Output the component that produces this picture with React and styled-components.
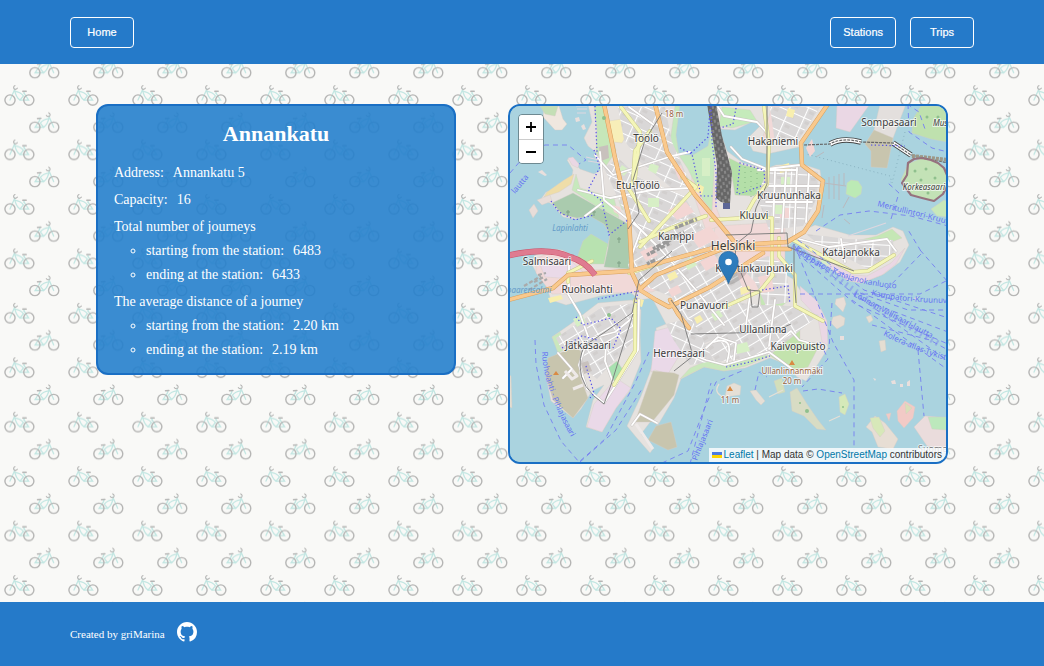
import React from 'react';
import styled, { createGlobalStyle } from 'styled-components';
import { BsGithub } from 'react-icons/bs';

const GlobalStyle = createGlobalStyle`
  * { box-sizing: border-box; }
  body {
    margin: 0;
    background: #f9f9f7;
    color: #fff;
    font-family: "Liberation Serif", "Times New Roman", serif;
  }
`;

const Page = styled.div`
  position: relative;
  isolation: isolate;
  display: flex;
  flex-direction: column;
  min-height: 100vh;
`;

const Backdrop = styled.svg`
  position: absolute;
  inset: 0;
  z-index: -1;
  width: 100%;
  height: 100%;
`;

const Header = styled.header`
  display: flex;
  justify-content: space-between;
  align-items: center;
  min-height: 64px;
  padding: 0 70px;
  background: #257ac9;
`;

const Nav = styled.nav`
  display: flex;
  gap: 14px;
`;

const NavButton = styled.button`
  min-width: 64px;
  height: 31px;
  padding: 0 12px;
  border: 1px solid #fff;
  border-radius: 4px;
  background: transparent;
  color: #fff;
  font: 11px/16px "Liberation Sans", Arial, sans-serif;
  -webkit-text-stroke: 0.2px #fff;
  cursor: pointer;
`;

const Main = styled.main`
  flex: 1;
  display: flex;
  flex-wrap: wrap;
  justify-content: center;
  align-items: flex-start;
  gap: 52px;
  padding: 40px 16px;
`;

const Card = styled.section`
  width: 360px;
  padding: 16px 16px 11px;
  border: 2px solid #1a6fc4;
  border-radius: 12px;
  background: rgba(37, 128, 204, 0.9);
  font-size: 14px;
  line-height: 24px;
`;

const Title = styled.h1`
  margin: 0 0 15px;
  font-size: 22px;
  line-height: 24px;
  text-align: center;
`;

const Details = styled.div`
  display: flex;
  flex-direction: column;
  gap: 3px;
`;

const Line = styled.p`
  margin: 0;
`;

const Value = styled.span`
  margin-left: 9px;
`;

const Breakdown = styled.ul`
  margin: 0;
  padding-left: 32px;
  list-style: circle;
`;

const MapFrame = styled.section`
  position: relative;
  width: 440px;
  height: 360px;
  overflow: hidden;
  border: 2px solid #1a6fc4;
  border-radius: 12px;
  background: #aad3df;
`;

const MapCanvas = styled.svg`
  display: block;
  width: 100%;
  height: 100%;
`;

const ZoomControl = styled.div`
  position: absolute;
  top: 8px;
  left: 8px;
  display: flex;
  flex-direction: column;
  border: 1px solid rgba(0, 0, 0, 0.35);
  border-radius: 4px;
  overflow: hidden;
`;

const ZoomButton = styled.button`
  display: grid;
  place-items: center;
  width: 24px;
  height: 24px;
  padding: 0;
  border: 0;
  background: #fff;
  color: #000;
  cursor: pointer;

  & + & { border-top: 1px solid #ccc; }
`;

const Attribution = styled.div`
  position: absolute;
  right: 0;
  bottom: 0;
  display: flex;
  align-items: center;
  gap: 2px;
  padding: 0 4px 0 3px;
  background: rgba(255, 255, 255, 0.8);
  color: #333;
  font: 10px/14px "Liberation Sans", Arial, sans-serif;
  white-space: nowrap;

  a { color: #0078a8; text-decoration: none; }
`;

const Footer = styled.footer`
  display: flex;
  align-items: center;
  gap: 12px;
  min-height: 64px;
  padding: 0 70px;
  background: #257ac9;
  font-size: 11px;
`;

const GithubLink = styled.a`
  display: flex;
  padding-bottom: 4px;
  color: #fff;
`;

const Bike = (props) => (
  <g fill="none" strokeLinecap="round" {...props}>
    <g stroke="#c2e6e2" strokeWidth="1.3">
      <path d="M10 45.6 L14.6 35.2 Q15.6 42.4 20 45.6 L28.6 45.6 L24.2 39" />
      <path d="M14.8 37 Q20.5 37.5 23.4 41.5 L20 45.6" />
      <path d="M24.2 39 L23.8 37.2" />
    </g>
    <g stroke="#b5b5b4" strokeWidth="1.4">
      <circle cx="10" cy="45.6" r="5.1" />
      <circle cx="28.8" cy="45.6" r="5.1" />
      <path d="M15 31.2 Q12.8 32.4 14 34.4 Q15.6 35.8 17.4 33.8" strokeWidth="1.1" />
      <path d="M22.8 36.8 L26.2 36.9" strokeWidth="1.5" />
    </g>
  </g>
);

const BikeBackdrop = () => (
  <Backdrop aria-hidden="true">
    <defs>
      <pattern id="bikes" width="64" height="54.44" patternUnits="userSpaceOnUse">
        <Bike />
        <Bike transform="translate(63.7 -27.3) scale(-1 1)" />
      </pattern>
    </defs>
    <rect width="100%" height="100%" fill="url(#bikes)" />
  </Backdrop>
);

/* Land, parks and built-up areas: [fill, path] */
const areas = [
  ['#e6e2df', 'M588 104 L592 122 L584 138 L588 146 L597 153 L601 170 L594 174 L580 169 L570 158 L567 160 L573 170 L571 182 L558 189 L546 192 L541 199 L552 204 L563 217 L575 219 L590 215 L604 224 L610 234 L608 246 L596 258 L576 257 L562 250 L548 249 L535 255 L531 263 L536 272 L545 283 L551 300 L566 305 L600 296 L630 292 L640 300 L652 298 L666 324 L656 328 L658 345 L650 372 L641 396 L627 426 L636 437 L650 453 L653 449 L641 434 L651 421 L658 425 L674 398 L681 379 L704 367 L724 371 L745 368 L770 358 L786 364 L797 377 L806 381 L818 364 L828 348 L824 324 L812 306 L800 290 L793 279 L781 272 L780 254 L793 241 L803 247 L828 265 L849 281 L862 283 L884 274 L900 262 L909 245 L903 231 L893 227 L876 235 L850 235 L815 225 L806 229 L817 214 L823 190 L820 170 L802 164 L800 147 L828 104 Z'],
  ['#e6e2df', 'M552 337 L572 323 L598 303 L632 300 L641 310 L640 335 L641 362 L629 392 L616 408 L602 432 L586 427 L593 400 L604 385 L592 391 L581 409 L573 418 L551 401 L546 376 L552 359 L560 351 Z'],
  ['#c8c5ae', 'M548 358 L575 347 L582 352 L579 373 L588 398 L573 418 L553 400 L546 376 Z'],
  ['#ead9e8', 'M594 404 L616 378 L631 388 L616 408 L602 432 L587 427 Z'],
  ['#ead9e8', 'M655 331 L674 326 L682 351 L668 374 L655 370 L651 372 Z'],
  ['#c8c5ae', 'M653 371 L674 373 L679 375 L674 395 L652 422 L635 422 Z'],
  ['#c8c5ae', 'M656 426 L671 422 L677 447 L668 450 L648 440 Z'],
  ['#f1d9d8', 'M536 259 L548 253 L576 259 L592 270 L652 267 L674 281 L652 292 L552 294 L536 273 Z'],
  ['#eadae8', 'M539 262 L570 260 L583 272 L560 278 L545 277 Z'],
  ['#f1d9d8', 'M715 226 L785 222 L785 260 L764 267 L768 288 L745 295 L733 270 L711 258 Z'],
  ['#f1d9d8', 'M691 104 L708 106 L716 207 L723 225 L706 231 L692 190 Z'],
  ['#f1d9d8', 'M772 106 L800 106 L799 120 L775 142 L762 140 Z'],
  ['#c5e8bf', 'M675 106 L713 106 L716 132 L712 211 L703 200 L688 169 L670 142 Z'],
  ['#aad3df', 'M680 104 L711 104 L714 118 L708 146 L693 155 L679 155 L676 135 Z'],
  ['#c5ebbb', 'M722 107 L750 110 L757 121 L732 128 L719 126 Z'],
  ['#aad3df', 'M719 129 L735 130 L754 121 L760 126 L747 139 L753 151 L767 154 L799 147 L802 164 L776 165 L766 169 L743 163 L727 151 Z'],
  ['#b4dfa8', 'M729 158 L743 165 L765 170 L765 184 L754 196 L735 195 Z'],
  ['#aacbae', 'M552 203 L573 193 L630 225 L629 269 L604 267 L608 248 L610 234 L604 224 L590 216 L577 218 L563 215 Z'],
  ['#b8e2b0', 'M583 241 L591 234 L608 244 L604 264 L589 264 L577 258 Z'],
  ['#c7e9bd', 'M576 174 L580 188 L614 198 L619 218 L596 206 L572 190 Z'],
  ['#efdda8', 'M547 192 L564 180 L574 174 L571 184 L559 192 L544 197 Z'],
  ['#c6e7b9', 'M594 106 L606 106 L612 132 L616 151 L606 166 L596 152 L597 130 Z'],
  ['#f7eeb8', 'M609 121 L622 119 L626 136 L622 143 L613 142 Z'],
  ['#d8edbf', 'M625 126 L635 122 L644 138 L631 145 Z'],
  ['#cae8bd', 'M612 180 L633 180 L635 205 L622 210 Z'],
  ['#cae8bd', 'M552 337 L560 332 L568 348 L558 353 Z'],
  ['#cae8bd', 'M596 324 L610 321 L615 333 L607 346 L598 338 Z'],
  ['#a8e1b0', 'M607 369 L617 361 L623 370 L614 382 Z'],
  ['#cae8bd', 'M680 379 L704 367 L724 371 L746 366 L770 356 L770 351 L747 360 L721 364 L706 361 L690 368 Z'],
  ['#c3e3ad', 'M769 329 L790 314 L800 322 L800 340 L820 344 L808 367 L794 370 L770 356 Z'],
  ['#c5e7b5', 'M759 288 L782 286 L789 300 L782 306 L761 305 Z'],
  ['#ead7e4', 'M800 286 L817 301 L827 321 L828 345 L822 342 L818 318 L801 300 Z'],
  ['#c5e7b5', 'M860 240 L877 236 L892 229 L902 238 L889 243 L870 250 Z'],
  ['#ead7e4', 'M800 246 L815 250 L842 268 L854 275 L867 276 L891 263 L905 248 L896 264 L882 275 L861 283 L847 280 L827 266 Z'],
  ['#ead7e4', 'M837 104 L870 104 L850 132 L836 128 Z'],
  ['#e3dfdd', 'M880 104 L906 104 L892 141 L873 134 Z'],
  ['#c8c5ae', 'M865 144 L874 130 L893 138 L887 168 L871 167 L871 151 Z'],
  ['#bfe1ae', 'M921 106 L948 106 L948 142 L931 139 L912 133 L913 119 Z'],
  ['#c3e2b6', 'M908 164 L922 158 L939 163 L948 175 L946 190 L934 201 L911 195 L901 180 Z'],
  ['#bceab5', 'M847 183 L851 180 L858 181 L862 187 L861 194 L855 198 L846 194 Z'],
  ['#c8e8ba', 'M931 209 L944 200 L948 202 L948 217 L937 216 Z'],
  ['#f0e7df', 'M544 108 L559 106 L563 119 L567 124 L562 130 L555 130 L543 117 Z'],
  ['#c4dfb6', 'M540 106 L558 106 L555 116 L545 114 Z'],
  ['#ead7e4', 'M568 158 L573 157 L579 164 L578 168 L572 165 Z'],
  ['#e8ddd9', 'M529 210 L534 204 L538 211 L533 218 Z'],
  ['#e8ddd9', 'M537 200 L550 195 L552 201 L542 205 Z'],
  ['#e5dfd6', 'M727 386 L734 383 L741 386 L740 395 L725 397 Z'],
  ['#e5dfd6', 'M750 391 L756 390 L765 401 L761 405 L756 400 Z'],
  ['#d3dfbb', 'M774 381 L782 378 L785 392 L778 394 Z'],
  ['#d8dcc4', 'M790 392 L797 388 L807 404 L818 420 L826 430 L817 429 L804 416 L792 411 Z'],
  ['#d5e9b9', 'M839 397 L845 394 L849 404 L845 415 L840 412 Z'],
  ['#e5ddd4', 'M833 317 L840 315 L845 318 L844 325 L837 329 L831 323 Z'],
  ['#e9ded7', 'M836 299 L844 297 L846 304 L843 312 L839 308 L835 304 Z'],
  ['#e7ded4', 'M866 427 L875 416 L885 423 L898 439 L893 449 L878 447 L872 432 Z'],
  ['#d7e8b9', 'M870 418 L879 417 L885 431 L880 437 L873 428 Z'],
  ['#f2cac6', 'M897 411 L905 401 L915 407 L913 418 L904 428 L898 421 Z'],
  ['#d9dfb8', 'M905 403 L912 408 L906 414 Z'],
  ['#eadcdc', 'M914 427 L925 416 L948 418 L948 450 L927 446 Z'],
  ['#bce8bc', 'M928 417 L948 417 L948 430 L932 429 Z'],
  ['#f2cac6', 'M886 414 L891 413 L889 421 Z'],
  ['#e5ded2', 'M866 317 L871 315 L873 320 L869 323 Z'],
  ['#e5ded2', 'M879 341 L885 340 L886 350 L881 352 Z'],
  ['#e5ded2', 'M506 373 L511 376 L512 408 L506 405 Z'],
];

/* Blocks of streets, each filled with a grid turned to its own angle */
const blocks = [
  ['a', 'M604 168 L618 158 L640 178 L684 196 L706 232 L665 246 L641 240 L627 218 Z'],
  ['a', 'M618 107 L665 107 L672 142 L690 183 L674 190 L640 162 L624 140 Z'],
  ['b', 'M635 240 L690 217 L730 255 L744 292 L732 332 L690 349 L672 297 L640 284 L628 266 Z'],
  ['c', 'M740 266 L768 256 L786 265 L790 302 L766 306 L755 282 Z'],
  ['c', 'M757 196 L767 171 L800 167 L818 172 L817 198 L803 226 L769 230 Z'],
  ['b', 'M728 302 L761 305 L790 306 L819 315 L770 355 L716 362 L704 345 L733 331 Z'],
  ['b', 'M556 338 L602 307 L638 303 L634 340 L597 379 L580 365 L581 347 L562 350 Z'],
  ['c', 'M806 234 L848 239 L893 240 L894 255 L870 270 L851 260 L828 252 Z'],
  ['a', 'M770 107 L820 107 L799 139 L775 143 Z'],
  ['a', 'M666 324 L691 318 L714 361 L690 365 L673 339 Z'],
];

/* Roads, drawn twice each: casing first, then surface */
const roads = {
  minor: [
    'M600 152 L604 200 L640 229 L661 250 L696 290 L724 325',
    'M595 155 L613 175 L672 156 L690 152',
    'M654 125 L629 107', 'M578 190 L610 198 L652 190 L691 188',
    'M602 203 L585 216', 'M632 220 L641 230 L630 260',
    'M568 294 L580 314 L589 339 L615 332 L636 315',
    'M585 347 L579 365 L587 389 L604 403 L617 383 L638 350 L639 300',
    'M606 345 L605 361 L613 382', 'M569 258 L569 293',
    'M718 107 L724 116 L757 122 L767 133', 'M731 147 L742 159 L767 169 L800 165',
    'M758 170 L797 170', 'M769 186 L819 186', 'M766 202 L812 202',
    'M775 172 L773 230', 'M786 172 L782 232', 'M797 168 L794 240', 'M809 173 L806 222',
    'M799 239 L829 247 L887 239 L896 251', 'M841 239 L845 262',
    'M691 354 L706 360 L725 365 L769 352 L792 369',
    'M706 348 L718 337 L736 343 L734 360', 'M714 342 Q735 335 727 362',
    'M769 349 L791 331 L799 340 L817 345', 'M750 295 L745 332', 'M775 300 L769 346',
    'M632 425 L640 414 L657 423', 'M558 353 L572 369 L563 378',
  ],
  yellow: [
    'M621 107 L640 132 L635 178 L629 189 L649 221',
    'M650 131 L635 151 L633 182', 'M640 242 L671 228 L706 216',
    'M711 220 L744 218 L754 200 L767 184 L769 144 L764 107',
    'M754 218 L772 218 L772 275', 'M568 282 L568 273 L592 261',
    'M629 273 L661 263', 'M779 238 L779 256 L795 275 L795 306 L823 321',
    'M793 240 L853 272 L868 271 L894 255', 'M635 300 L635 351 L614 385',
    'M640 247 L696 187 L682 177', 'M773 275 L760 291 L724 307',
  ],
  orange: [
    'M604 104 L615 158 L629 218 L632 273 L640 290 L656 300 L669 307 L710 287 L763 253',
    'M655 104 L667 152 L695 195 L718 222 L736 244',
    'M508 300 L553 288 L568 275 L630 271 L720 246 L787 242 L804 232 L818 211 L823 181 L802 165 L801 143 L828 104',
    'M640 289 L656 275 L725 248', 'M725 249 L790 249',
    'M670 300 L678 314 L689 328',
  ],
};

const tracks = [
  'M662 113 L645 140 L633 180 L639 213 L628 229',
  'M767 104 L767 184 L756 208 L751 232 L736 244 L735 258 L748 290 L760 291 L758 307 L752 307 L750 289',
  'M671 300 L681 314 L693 356 L674 371', 'M587 344 L605 332 L632 313 L639 280 L672 251',
  'M633 314 L611 385 L604 404 Q580 388 580 366 Q580 350 587 344', 'M726 235 L787 233 L788 247 L854 271',
  'M794 244 L794 276 L796 303', 'M691 334 L773 332 L791 324',
];

const ferries = [
  'M510 173 L528 152 L545 145 L568 145 L586 160 L579 164',
  'M535 340 L536 364 L544 405 L561 441 L579 462 L605 439 L635 383 L649 352',
  'M580 462 L616 430 L642 389', 'M662 463 L688 451 L706 405 L716 382 L744 370',
  'M690 464 L711 383', 'M816 231 L840 215 L869 211 L911 216 L948 226',
  'M891 219 L899 193 L888 183 L891 182', 'M908 104 L909 132 L932 148 L948 152',
  'M907 104 L919 112 L925 129', 'M798 240 L864 290 L948 318',
  'M798 246 L858 298 L948 332', 'M797 253 L855 304 L948 344',
  'M800 294 L920 294 L948 280', 'M795 246 L833 342 L854 380 L854 450',
  'M886 290 L922 253 L907 228', 'M920 250 L948 282', 'M860 293 L908 310 L948 310',
  'M860 298 L948 361', 'M852 300 L948 370', 'M872 325 L930 340 L948 350',
  'M918 350 L924 416', 'M803 391 L818 389 L842 393', 'M820 342 L828 359 L802 387',
  'M755 390 L759 372 L767 377', 'M832 303 L829 349',
];

const cycleways = [
  'M594 150 L600 167 L588 190 L602 201 L609 235 L629 219',
  'M680 148 L692 154 L701 196 L713 196', 'M711 106 L712 142 L716 172 L716 209',
  'M691 153 L708 137 L710 110', 'M736 108 L733 124 L720 128',
  'M737 193 L740 163 L764 170 L765 184', 'M739 194 L761 186',
  'M598 299 L638 291 L636 303', 'M576 317 L583 325 L611 318 L621 329 L613 348',
  'M586 366 L594 393 L590 398', 'M726 367 L746 363 L770 356',
  'M762 290 L788 286 L790 304', 'M551 201 L559 212 L575 220 L594 215',
  'M595 106 L597 152', 'M871 145 L905 146', 'M562 348 L582 336 L597 340',
];

const labels = [
  ['Töölö', 646, 142], ['Etu-Töölö', 638, 189], ['Hakaniemi', 773, 145],
  ['Sompasaari', 889, 126], ['Kruununhaka', 789, 199], ['Kluuvi', 754, 219],
  ['Kamppi', 676, 240], ['Salmisaari', 547, 265], ['Ruoholahti', 587, 293],
  ['Kaartinkaupunki', 754, 272], ['Katajanokka', 851, 256], ['Punavuori', 704, 309],
  ['Ullanlinna', 763, 333], ['Kaivopuisto', 798, 350], ['Jätkäsaari', 588, 349],
  ['Hernesaari', 679, 357],
];

const Roads = ({ paths, casing, fill, width }) => (
  <g fill="none" strokeLinejoin="round" strokeLinecap="round">
    {paths.map((d) => <path key={d} d={d} stroke={casing} strokeWidth={width + 1} />)}
    {paths.map((d) => <path key={d} d={d} stroke={fill} strokeWidth={width} />)}
  </g>
);

const StreetGrid = ({ id, angle }) => (
  <pattern id={id} width="17" height="11" patternUnits="userSpaceOnUse" patternTransform={`rotate(${angle})`}>
    <rect width="17" height="11" fill="#d9d7d7" />
    <rect x="3" y="3" width="5" height="3" fill="#d2cfce" />
    <path d="M0 0 H17 M0 0 V11" stroke="#fff" strokeWidth="2.2" />
  </pattern>
);

const HelsinkiMap = () => (
  <MapCanvas viewBox="510 106 436 356" preserveAspectRatio="xMidYMid slice" role="img" aria-label="Map of Helsinki">
    <defs>
      <StreetGrid id="grid-a" angle={24} />
      <StreetGrid id="grid-b" angle={-31} />
      <StreetGrid id="grid-c" angle={3} />
      <pattern id="sleepers" width="6" height="7" patternUnits="userSpaceOnUse" patternTransform="rotate(-8)">
        <rect width="6" height="7" fill="#666" />
        <path d="M1 1 V4 M4 4 V7" stroke="#aaa" strokeWidth="1" />
      </pattern>
      <linearGradient id="pin" x2="0" y2="1">
        <stop offset="0" stopColor="#2e7fc1" />
        <stop offset="1" stopColor="#2b76b4" />
      </linearGradient>
      <path id="ferry-west" d="M542 352 Q543 390 576 446" />
      <path id="ferry-south" d="M697 461 L718 408" />
      <path id="ferry-katajanokka" d="M794 250 Q838 286 905 289" />
      <path id="ferry-north" d="M877 206 L960 227" />
      <path id="ferry-kruunu" d="M871 295 Q904 304 970 303" />
      <path id="ferry-kolera" d="M883 335 Q915 352 965 366" />
      <path id="ferry-mid" d="M853 296 L945 346" />
    </defs>
    <rect x="510" y="106" width="436" height="356" fill="#aad3df" />

    {areas.map(([fill, d]) => <path key={d} d={d} fill={fill} stroke="#d3cdc4" strokeWidth="0.4" strokeLinejoin="round" />)}
    {blocks.map(([grid, d]) => <path key={d} d={d} fill={`url(#grid-${grid})`} />)}

    <g fill="#f3d6d4">
      <path d="M668 210 l18 -8 8 10 -17 8z M690 236 l20 -10 9 12 -20 10z M640 252 l12 -6 6 9 -12 6z M700 262 l14 -8 6 9 -14 8z M758 277 l13 -3 3 17 -12 2z M674 168 l7 -3 5 12 -7 3z M806 148 l6 -9 3 12 -5 6z M668 290 l10 -5 4 7 -10 5z M612 205 l8 2 2 9 -8 -4z M780 208 h9 v10 h-9z" />
    </g>
    <g fill="#d7efc6">
      <path d="M648 198 h11 v9 h-11z M683 262 l9 -5 5 8 -9 5z M711 314 l8 -4 4 6 -8 5z M775 205 h8 v9 h-8z M781 177 h9 v8 h-9z M573 319 l9 -4 4 7 -9 5z M822 256 l9 2 -2 8 -8 -4z M702 158 h8 v18 h-8z M650 163 l9 3 -3 8 -8 -4z M622 165 l7 5 -5 6 -6 -5z M735 345 l12 -3 3 9 -13 3z" />
    </g>
    <g fill="#f8efae">
      <path d="M779 166 l10 -3 1 8 -10 2z M667 275 l8 -4 3 6 -8 4z M694 318 l6 -3 3 5 -6 4z M637 298 l7 2 -2 7 -6 -2z M740 288 l9 -2 2 5 -10 4z M548 298 l13 -3 2 4 -13 4z M788 108 l7 2 -2 8 -7 -2z M697 183 l7 4 -2 8 -7 -4z" />
    </g>
    <path d="M599 147 L608 145 L609 158 L601 161 Z M581 363 L588 361 L592 371 L584 374 Z" fill="#c8c1bd" />
    <path d="M745 167 V197 M751 166 V197 M757 168 V195" stroke="#87b985" strokeWidth="1" strokeDasharray="1 4" />
    <path d="M568 210 v6 M566 212 h4 M594 210 v6 M592 212 h4 M619 237 v6 M617 239 h4 M619 261 v6 M617 263 h4" stroke="#7f9f85" strokeWidth="1" />

    <Roads paths={roads.minor} casing="#c9c4c2" fill="#fff" width={1.8} />
    <Roads paths={roads.yellow} casing="#c9c98a" fill="#f4f6b8" width={3} />
    <Roads paths={roads.orange} casing="#d8a05e" fill="#f9c98d" width={3.4} />
    <path d="M506 256 Q548 246 570 257 Q585 261 595 275" fill="none" stroke="#c9556c" strokeWidth="6" />
    <path d="M506 256 Q548 246 570 257 Q585 261 595 275" fill="none" stroke="#df7b90" strokeWidth="5" />

    <g fill="none" stroke="#777" strokeWidth="0.9">
      {tracks.map((d) => <path key={d} d={d} />)}
    </g>
    <path d="M707 104 L716 104 L722 136 L732 172 L730 204 L721 202 L716 198 L717 165 Z" fill="url(#sleepers)" />
    <path d="M723 203 h7 v6 h-7z" fill="#5d6797" />
    <path d="M653 249 L678 236 M647 255 L670 243 M664 243 L684 232 M675 228 L697 219 M647 264 L657 259" stroke="#999" strokeWidth="3.5" strokeDasharray="3 1 5 2" />
    <path d="M524 286 l17 -10 M529 290 l18 -11 M534 282 l10 -5 M538 275 l8 -2" stroke="#aaa" strokeWidth="2.2" strokeDasharray="4 2" />

    <g fill="none" strokeLinejoin="round">
      <path d="M830 144 Q842 137 861 142 M893 143 L911 155" stroke="#444" strokeWidth="5.5" />
      <path d="M830 144 Q842 137 861 142 M893 143 L911 155" stroke="#fff" strokeWidth="3.8" />
      <path d="M804 145 L830 144 Q842 137 861 142 L893 143 L911 155 L948 163" stroke="#666" strokeWidth="1.2" strokeDasharray="3 1" />
      <path d="M912 156 L948 160" stroke="#9d9887" strokeWidth="4" strokeDasharray="3 1" />
      <path d="M908 163 L914 159 L922 158 L931 160 L938 163 L944 168 L947 175 L948 184 L943 194 L934 201 L922 198 L911 195 L902 183 L907 175 Z" stroke="#96727e" strokeWidth="2.2" />
      <path d="M824 183 L846 186 M829 177 V199 M834 176 V199 M839 174 V200 M844 173 V185 M843 208 L849 197 M844 219 L850 224 M822 218 l2 -13 M824 152 l-8 5" stroke="#b9b9be" strokeWidth="1" />
      <path d="M848 236 L886 223 M576 106 h11 M577 109 h10 M577 113 h9 M586 157 l13 3 M588 161 l13 2" stroke="#ded7df" strokeWidth="1.2" />
      <path d="M905 132 L892 183 L890 176 L806 154" stroke="#7fa8b8" strokeWidth="0.8" strokeDasharray="1 3" />
      <path d="M636 424 L653 449 M565 371 l7 8 5 -3 -5 -6 M573 389 l10 -4" stroke="#eee9e8" strokeWidth="3" />
      <path d="M719 384 Q713 392 723 397 M769 397 L783 390 M829 421 L840 416" stroke="#e5dfd6" strokeWidth="1.3" />
    </g>

    <g fill="none" stroke="#7b87ef" strokeWidth="1" strokeDasharray="5 4">
      {ferries.map((d) => <path key={d} d={d} />)}
    </g>
    <path d="M792 246 L815 261 L838 279 L869 301 M874 306 L939 344" fill="none" stroke="#7177ef" strokeWidth="6" strokeDasharray="2 4" opacity="0.4" />
    <g fill="none" stroke="#554fe8" strokeWidth="1.2" strokeDasharray="1.3 2.4">
      {cycleways.map((d) => <path key={d} d={d} />)}
    </g>

    <g fill="#d98a43">
      <path d="M730 386 l3 5 h-6z M792 360 l3 5 h-6z M556 371 l3 4 h-6z" />
    </g>
    <g fill="#8fc08d">
      <circle cx="915" cy="171" r="1.5" /><circle cx="926" cy="169" r="1.5" /><circle cx="921" cy="180" r="1.5" />
      <circle cx="935" cy="178" r="1.5" /><circle cx="928" cy="193" r="1.5" /><circle cx="938" cy="117" r="1.5" />
      <circle cx="927" cy="117" r="1.5" /><circle cx="807" cy="411" r="2" /><circle cx="800" cy="403" r="1" />
      <circle cx="843" cy="407" r="1" /><circle cx="609" cy="315" r="2" /><circle cx="604" cy="118" r="2" />
    </g>
    <g fill="#e9dfdd">
      <path d="M538 172 l4 -2 5 5 -2 1z M575 118 l4 -1 1 4 -4 1z M581 126 l3 -2 2 5 -3 1z M586 138 l4 -4 1 7 -4 3z M873 378 l3 1 -1 2z M891 381 l4 -1 1 4 -4 0z M900 384 h3 v3 h-3z M907 382 l3 -2 0 6 -3 0z M840 336 h4 v4 h-4z M914 298 l4 -1 -1 4z" />
    </g>

    <g fontFamily='"Noto Sans", sans-serif' fontSize="9" fill="#6674f2">
      <g fontStyle="italic" fontSize="8" fill="#659bc8" textAnchor="middle">
        <text x="570" y="231">Lapinlahti</text>
        <text x="529" y="293">baarensalmi</text>
      </g>
      <text transform="translate(515 194) rotate(-50)" fontSize="8">lautta</text>
      <text fontSize="8"><textPath href="#ferry-west">Ruoholahti - Pihlajasaari</textPath></text>
      <text fontSize="8"><textPath href="#ferry-south">Pihlajasaari</textPath></text>
      <text fontSize="8"><textPath href="#ferry-katajanokka">Kauppatori-Katajanokanluoto</textPath></text>
      <text fontSize="8"><textPath href="#ferry-north">Meritullintori-Kruunu</textPath></text>
      <text fontSize="8"><textPath href="#ferry-kruunu">Kauppatori-Kruunuv</textPath></text>
      <text fontSize="8"><textPath href="#ferry-kolera">Kolera-allas-Tykist</textPath></text>
      <text fontSize="8"><textPath href="#ferry-mid">Lonnan-Vallisaari-lautta</textPath></text>
    </g>

    <g fontFamily='"Noto Sans", sans-serif' textAnchor="middle" paintOrder="stroke" stroke="#ffffff" strokeOpacity="0.65" strokeWidth="2" strokeLinejoin="round" fill="#3c3c3c">
      {labels.map(([name, x, y]) => <text key={name} x={x} y={y} fontSize="10">{name}</text>)}
      <text x="733" y="250" fontSize="12">Helsinki</text>
      <g fontStyle="italic" fontSize="8">
        <text x="924" y="190">Korkeasaari</text>
        <text x="933" y="126" textAnchor="start">Mustikkamaa</text>
      </g>
      <g fontSize="8" fill="#9a6542">
        <text x="674" y="117">18 m</text>
        <text x="730" y="403">11 m</text>
        <text x="792" y="374">Ullanlinnanmäki</text>
        <text x="792" y="384">20 m</text>
      </g>
      <text x="918" y="452" textAnchor="start" fontSize="9" fill="#777">Suomenlinna</text>
    </g>

    <ellipse cx="737" cy="277" rx="12" ry="4" fill="#444" opacity="0.22" transform="rotate(-35 737 277)" />
    <path d="M728.5 283.5 C726 276 718.8 269 718.8 261.3 A9.7 9.9 0 0 1 738.2 261.3 C738.2 269 731 276 728.5 283.5 Z" fill="url(#pin)" stroke="#2468a2" strokeWidth="0.8" />
    <circle cx="728.5" cy="262" r="3.3" fill="#fff" />
  </MapCanvas>
);

const journeys = [
  { title: 'Total number of journeys', starting: '6483', ending: '6433' },
  { title: 'The average distance of a journey', starting: '2.20 km', ending: '2.19 km' },
];

export default function App() {
  return (
    <Page>
      <GlobalStyle />
      <BikeBackdrop />
      <Header>
        <NavButton type="button">Home</NavButton>
        <Nav>
          <NavButton type="button">Stations</NavButton>
          <NavButton type="button">Trips</NavButton>
        </Nav>
      </Header>
      <Main>
        <Card>
          <Title>Annankatu</Title>
          <Details>
            <Line>Address:<Value>Annankatu 5</Value></Line>
            <Line>Capacity:<Value>16</Value></Line>
            {journeys.map(({ title, starting, ending }) => (
              <div key={title}>
                <Line>{title}</Line>
                <Breakdown>
                  <li>starting from the station:<Value>{starting}</Value></li>
                  <li>ending at the station:<Value>{ending}</Value></li>
                </Breakdown>
              </div>
            ))}
          </Details>
        </Card>
        <MapFrame>
          <HelsinkiMap />
          <ZoomControl>
            <ZoomButton type="button" aria-label="Zoom in">
              <svg width="10" height="10" viewBox="0 0 10 10"><path d="M5 0 V10 M0 5 H10" stroke="#000" strokeWidth="1.8" /></svg>
            </ZoomButton>
            <ZoomButton type="button" aria-label="Zoom out">
              <svg width="10" height="10" viewBox="0 0 10 10"><path d="M0 5 H10" stroke="#000" strokeWidth="1.8" /></svg>
            </ZoomButton>
          </ZoomControl>
          <Attribution>
            <svg width="10" height="6" viewBox="0 0 10 6" aria-hidden="true">
              <path d="M0 0 H10 V3 H0z" fill="#4c7be1" />
              <path d="M0 3 H10 V6 H0z" fill="#ffd500" />
            </svg>
            <span>
              <a href="#leaflet">Leaflet</a> | Map data © <a href="#openstreetmap">OpenStreetMap</a> contributors
            </span>
          </Attribution>
        </MapFrame>
      </Main>
      <Footer>
        <span>Created by griMarina</span>
        <GithubLink href="#github" aria-label="GitHub"><BsGithub size={20} /></GithubLink>
      </Footer>
    </Page>
  );
}
